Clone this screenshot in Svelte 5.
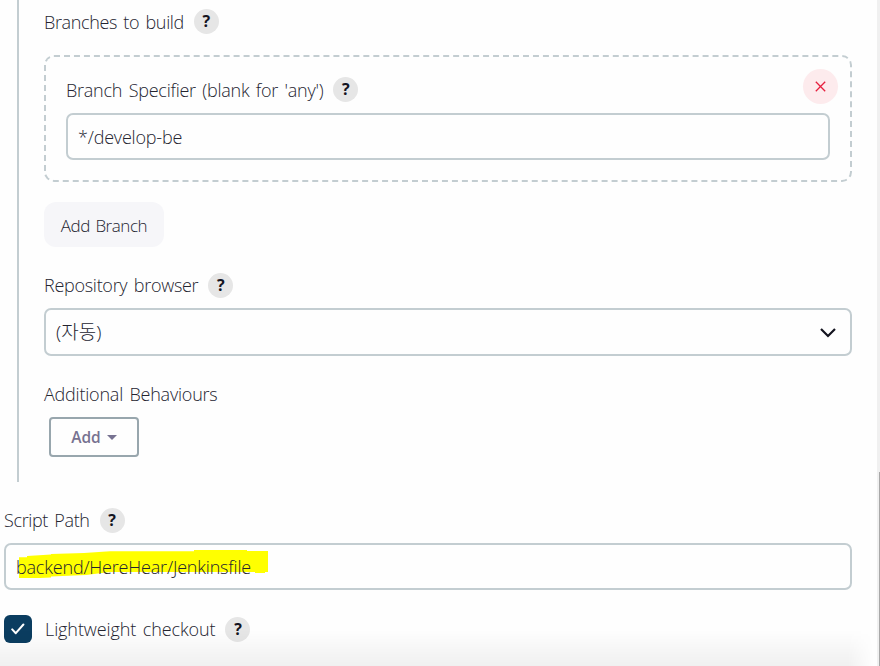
<script>
  const texts = {
    branches: 'Branches to build',
    specifier: "Branch Specifier (blank for 'any')",
    browser: 'Repository browser',
    script: 'Script Path',
    checkout: 'Lightweight checkout'
  };
</script>

{#snippet help()}
  <button class="help" aria-label="Help">?</button>
{/snippet}

<main>
  <section class="group">
    <div class="label first"><span class="t1">{texts.branches}</span>{@render help()}</div>

    <div class="chunk">
      <button class="remove" aria-label="Delete">
        <svg width="11" height="11" viewBox="0 0 11 11"><path d="M.8.8l9.4 9.4M10.2.8L.8 10.2" /></svg>
      </button>
      <div class="label"><span class="t2">{texts.specifier}</span>{@render help()}</div>
      <div class="field"><span class="t3">*/develop-be</span></div>
    </div>

    <button class="add-branch"><span class="t4">Add Branch</span></button>

    <div class="label browser"><span class="t5">{texts.browser}</span>{@render help()}</div>
    <div class="field select">
      <span class="t6">(자동)</span>
      <svg width="18" height="12" viewBox="0 0 18 12"><path d="M2 2l7 7 7-7" /></svg>
    </div>

    <div class="label behaviours"><span class="t7">Additional Behaviours</span></div>
    <button class="add"><span class="t8">Add</span><i></i></button>
  </section>

  <div class="label script"><span class="t9">{texts.script}</span>{@render help()}</div>
  <div class="field path">
    <svg class="marker" width="252" height="32" viewBox="16 548 252 32">
      <path d="M19 557.3H27V556L51 554.5V554L84 553L110 551.3H194V550H247V551H268V572H265V573H255V572H110L86 575L51 576.5V577.5L40 578H19Z" />
    </svg>
    <span class="t10">backend/HereHear/Jenkinsfile</span>
  </div>

  <div class="check label">
    <span class="box"><svg width="14" height="12" viewBox="0 0 14 12"><path d="M1.2 6.4l3.6 3.8L12.4 1.5" /></svg></span>
    <span class="t11">{texts.checkout}</span>{@render help()}
  </div>

  <div class="shade"></div>
  <div class="track"><div class="thumb"></div></div>
</main>

<style>
  :global(body) { background: #fefefe; }
  main {
    box-sizing: border-box;
    position: relative;
    width: 880px;
    height: 666px;
    padding: 0 28px 0 4px;
    overflow: hidden;
    color: #242430;
    font: 300 18px/25px "Open Sans", "Noto Sans CJK KR", sans-serif;
  }
  button { border: 0; padding: 0; font: inherit; color: inherit; display: flex; align-items: center; justify-content: center; }
  span { white-space: nowrap; }
  .group {
    box-sizing: border-box;
    height: 482px;
    margin-left: 13px;
    padding: 9px 0 0 25px;
    border-left: 2px solid #c3cdd1;
  }
  .label { display: flex; height: 25px; align-items: center; word-spacing: 2px; }
  .t1, .t2 { padding-top: 2px; }
  .t1 { letter-spacing: -.36px; }
  .t2 { letter-spacing: -.24px; }
  .t3 { letter-spacing: -.2px; }
  .t4 { letter-spacing: -.45px; word-spacing: 1.5px; }
  .t5 { letter-spacing: -.28px; }
  .t6 { font-size: 19px; padding-top: 1px; }
  .t7 { letter-spacing: -.22px; }
  .t9 { letter-spacing: -.36px; }
  .t10 { letter-spacing: -.19px; }
  .t11 { letter-spacing: -.1px; padding-top: 1px; }
  .help {
    flex: none;
    width: 25px;
    height: 25px;
    margin-left: 10px;
    border-radius: 50%;
    background: #e6e6e6;
    color: #14141f;
    font: 700 16px/25px "Open Sans", sans-serif;
  }
  .chunk {
    box-sizing: border-box;
    position: relative;
    height: 127px;
    margin-top: 21px;
    padding: 20px;
    border: 2px dashed #c3cdd1;
    border-radius: 10px;
  }
  .remove {
    position: absolute;
    top: 12px;
    right: 12px;
    width: 35px;
    height: 35px;
    border-radius: 50%;
    background: #fdebed;
  }
  svg path { fill: none; }
  .remove path { stroke: #e6203f; stroke-width: 1.3; }
  .field {
    box-sizing: border-box;
    display: flex;
    align-items: center;
    height: 47px;
    padding: 2px 10px 0;
    border: 2px solid #c3cdd1;
    border-radius: 7px;
    background: #fefefe;
  }
  .chunk .field { margin-top: 11px; }
  .add-branch { width: 120px; height: 45px; margin-top: 20px; padding-top: 2px; border-radius: 12px; background: #f6f6f9; font-size: 17px; }
  .browser { margin-top: 26px; }
  .select { height: 48px; margin-top: 10px; padding-top: 0; justify-content: space-between; }
  .select svg { margin: 1px 3px 0 0; }
  .select path { stroke: #14141f; stroke-width: 2.2; }
  .behaviours { margin-top: 26px; }
  .add {
    box-sizing: border-box;
    width: 90px;
    height: 40px;
    margin: 10px 0 0 5px;
    border: 2px solid #98a6ad;
    border-radius: 4px;
    background: #fefefe;
    color: #777291;
    font-weight: 600;
    font-size: 15.5px;
  }
  .add i { margin-left: 6px; border: 5px solid transparent; border-top-color: #777291; border-bottom: 0; }
  .script { margin-top: 26px; }
  .path { position: relative; margin-top: 10px; }
  .path span { position: relative; }
  .marker { position: absolute; left: 10px; top: 3px; }
  .marker path { fill: #ff0; }
  .check { height: 28px; margin-top: 25px; }
  .box { display: flex; align-items: center; justify-content: center; width: 28px; height: 28px; margin-right: 13px; border-radius: 6px; background: #0b3d60; }
  .box path { stroke: #fff; stroke-width: 2; stroke-linecap: round; stroke-linejoin: round; }
  .shade {
    position: absolute;
    inset: 630px 6px 0 0;
    background: linear-gradient(rgba(0, 0, 0, 0), rgba(0, 0, 0, .055));
    mask-image: linear-gradient(to left, transparent, #000 26px);
  }
  .track { position: absolute; inset: 0 0 0 877px; background: #f0f0f0; }
  .thumb { height: 194px; margin: 472px 0 0 2px; background: #a8a8a8; }
</style>
